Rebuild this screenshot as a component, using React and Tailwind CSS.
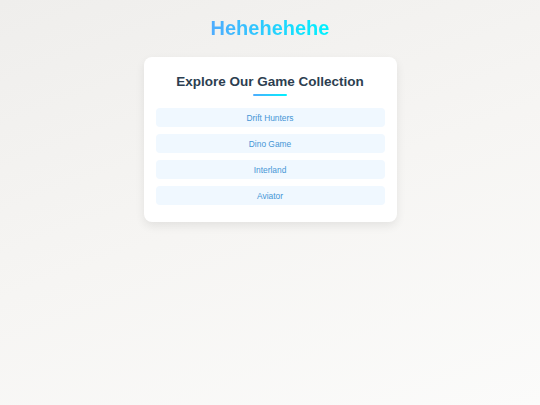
export default function App() {
  const games = ["Drift Hunters", "Dino Game", "Interland", "Aviator"];
  return (
    <div
      className="min-h-[405px] w-full bg-[linear-gradient(160deg,#efeeec_0%,#f6f5f3_50%,#fbfbfa_100%)] flex flex-col items-center"
      style={{ fontFamily: '"Liberation Sans", Arial, sans-serif' }}
    >
      <h1 className="mt-[16px] text-[20px] leading-[24px] font-bold bg-[linear-gradient(90deg,#4facfe,#00f2fe)] bg-clip-text text-transparent">
        Hehehehehe
      </h1>
      <div className="mt-[17px] w-[253px] bg-white rounded-[8px] shadow-[0_4px_10px_rgba(0,0,0,0.08)] px-[12px] pt-[17px] pb-[17px] flex flex-col items-center">
        <h2 className="text-[13.5px] leading-[16px] font-bold text-[#2c3e50]">
          Explore Our Game Collection
        </h2>
        <div className="mt-[4px] w-[34px] h-[2px] rounded-full bg-[linear-gradient(90deg,#4facfe,#00f2fe)]" />
        <div className="mt-[12px] w-full flex flex-col gap-[7px]">
          {games.map((g) => (
            <div
              key={g}
              className="h-[19px] w-full rounded-[4px] bg-[#f0f8ff] flex items-center justify-center pt-[1px] text-[8.4px] text-[#4596d6]"
            >
              {g}
            </div>
          ))}
        </div>
      </div>
    </div>
  );
}
